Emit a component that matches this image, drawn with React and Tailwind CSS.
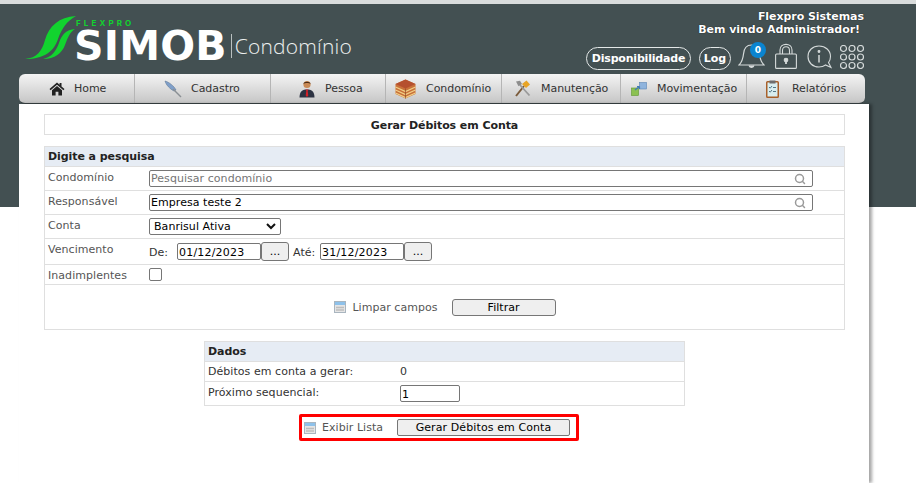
import { Search } from 'lucide-react';

const FONT = "font-['DejaVu_Sans',sans-serif]";

function HomeIcon() {
  return (
    <svg width="16" height="14" viewBox="0 0 16 14" className="shrink-0">
      <path d="M8 0.5 L0.5 7 L1.6 8.2 L8 2.8 L14.4 8.2 L15.5 7 L12.5 4.4 V1 H10.6 V2.8 Z" fill="#222" />
      <path d="M8 4 L3 8.2 V13.5 H6.6 V9.8 H9.4 V13.5 H13 V8.2 Z" fill="#222" />
    </svg>
  );
}

function FeatherIcon() {
  return (
    <svg width="18" height="18" viewBox="0 0 18 18" className="shrink-0">
      <path d="M1 1 C5 2 10 6 12 10 L10 11 C6 9 2 5 1 1 Z" fill="#7f9fc9" stroke="#56708f" strokeWidth="0.5" />
      <path d="M9 9 L17 17" stroke="#8a8f94" strokeWidth="1.4" />
    </svg>
  );
}

function PersonIcon() {
  return (
    <svg width="16" height="18" viewBox="0 0 16 18" className="shrink-0">
      <circle cx="8" cy="4.5" r="3.6" fill="#c98a55" />
      <path d="M4.4 4 C4.6 1 11.4 1 11.6 4 C10 2.8 6 2.8 4.4 4 Z" fill="#4a2c17" />
      <path d="M0.5 17.5 C0.5 11 4 9.5 8 9.5 C12 9.5 15.5 11 15.5 17.5 Z" fill="#2c3242" />
      <path d="M6.6 9.5 H9.4 L8.7 11 L9.3 15.5 L8 17 L6.7 15.5 L7.3 11 Z" fill="#d32027" />
    </svg>
  );
}

function BuildingIcon() {
  return (
    <svg width="21" height="20" viewBox="0 0 21 20" className="shrink-0">
      <path d="M10.5 0.5 L20.5 5 V15 L10.5 19.5 L0.5 15 V5 Z" fill="#c9713a" />
      <path d="M10.5 0.5 L20.5 5 L10.5 9.5 L0.5 5 Z" fill="#b5502f" />
      <path d="M0.5 8 L10.5 12.5 L20.5 8 M0.5 11 L10.5 15.5 L20.5 11 M0.5 14 L10.5 18.5 L20.5 14" fill="none" stroke="#f1d188" strokeWidth="1.2" />
      <path d="M10.5 9.5 V19.5" stroke="#8d4a25" strokeWidth="0.7" />
    </svg>
  );
}

function ToolsIcon() {
  return (
    <svg width="17" height="17" viewBox="0 0 17 17" className="shrink-0">
      <path d="M2 16 L10 6" stroke="#7a5a3a" strokeWidth="2" />
      <path d="M15.5 15.5 L6 5" stroke="#9a9a9a" strokeWidth="1.8" />
      <path d="M2 1.5 L6 0.8 L8 4 L4.5 6.2 Z" fill="#8d8d8d" />
      <path d="M8 4 L12.5 0.5 L16 4.5 L12 8 Z" fill="#e8a425" />
    </svg>
  );
}

function MoveIcon() {
  return (
    <svg width="16" height="14" viewBox="0 0 16 14" className="shrink-0">
      <rect x="0.5" y="6" width="7" height="7.5" fill="#8cc152" stroke="#5f9631" strokeWidth="0.6" />
      <rect x="8.5" y="0.5" width="7" height="6.5" fill="#8fb4dd" stroke="#5d86b4" strokeWidth="0.6" />
      <path d="M4 8 L8.5 4.5 M8.5 4.5 H6 M8.5 4.5 V7" stroke="#3f7ab8" strokeWidth="1.2" fill="none" />
    </svg>
  );
}

function ClipboardIcon() {
  return (
    <svg width="13" height="18" viewBox="0 0 13 18" className="shrink-0">
      <rect x="0.75" y="1.75" width="11.5" height="15.5" rx="0.8" fill="#d8eef0" stroke="#a8602a" strokeWidth="1.5" />
      <rect x="3.5" y="0.5" width="6" height="3" fill="#6d6d6d" />
      <path d="M3 7 L4.2 8.2 L6 6 M7 7.5 H10 M3 11 L4.2 12.2 L6 10 M7 11.5 H10" stroke="#44697a" strokeWidth="0.9" fill="none" />
    </svg>
  );
}

function ListIcon() {
  return (
    <svg width="12" height="12" viewBox="0 0 12 12" className="shrink-0">
      <rect x="0.5" y="0.5" width="11" height="11" fill="#e5e5e5" stroke="#a9b5bf" />
      <rect x="1" y="1" width="10" height="3" fill="#8ec1ea" />
      <path d="M2 6.5 H10 M2 9 H10" stroke="#bdbdbd" strokeWidth="1.5" />
    </svg>
  );
}

function LogoMark() {
  return (
    <svg width="52" height="44" viewBox="0 0 52 44" className="shrink-0">
      <path d="M0 43 C12 42 17 35 20 24 C24 10 34 1 51 0 C42 5 37 12 33 23 C29 35 20 43 0 43 Z" fill="#12d32f" />
      <path d="M18 43 C27 41 31 35 34 27 C37 18 41 14 50 13 C45 16 43 21 40 29 C37 37 30 43 18 43 Z" fill="#12d32f" />
    </svg>
  );
}

function BellIcon() {
  return (
    <div className="relative w-[27px] h-[26px]">
      <svg width="27" height="26" viewBox="0 0 27 26" fill="none" stroke="#d5dada" strokeWidth="1.2">
        <path d="M1 22 C4 19 5 16 5.500 11 C6 5 9 2 13.500 2 C18 2 21 5 21.500 11 C22 16 23 19 26 22 Z" />
        <path d="M11 22.500 C11.500 25 15.500 25 16 22.500" fill="#d5dada" />
      </svg>
      <span className="absolute right-[-1px] top-[-1px] w-[16px] h-[16px] rounded-full bg-[#0a84d0] text-white text-[9px] font-bold leading-[16px] text-center">0</span>
    </div>
  );
}

function LockIcon() {
  return (
    <svg width="22" height="26" viewBox="0 0 22 26" fill="none" stroke="#d5dada" strokeWidth="1.1">
      <path d="M5 11 V7 C5 -0.500 17 -0.500 17 7 V11" />
      <path d="M7.500 11 V7.500 C7.500 2.500 14.500 2.500 14.500 7.500 V11" />
      <rect x="0.600" y="11" width="20.800" height="14.400" rx="1" />
      <circle cx="11" cy="17" r="1.800" fill="#d5dada" />
      <path d="M11 17 V21" strokeWidth="1.800" />
    </svg>
  );
}

function InfoIcon() {
  return (
    <svg width="25" height="24" viewBox="0 0 25 24" fill="none" stroke="#d5dada" strokeWidth="1.100">
      <path d="M12 1 C5.500 1 1 5.500 1 11.500 C1 17.500 5.500 22 12 22 C14.500 22 16.500 21.500 18.500 20 L24 22.500 L21.500 17.500 C22.800 15.800 23.500 14 23.500 11.500 C23.500 5.500 18.500 1 12 1 Z" />
      <path d="M12 10 V17.500" strokeWidth="1.500" />
      <circle cx="12" cy="6.500" r="0.900" fill="#d5dada" />
    </svg>
  );
}

function DotsIcon() {
  return (
    <svg width="24" height="24" viewBox="0 0 24 24" fill="none" stroke="#d5dada" strokeWidth="1.200">
      {[3.500, 12, 20.500].map((y) =>
        [3.500, 12, 20.500].map((x) => <circle key={`${x}-${y}`} cx={x} cy={y} r="3" />)
      )}
    </svg>
  );
}

const MENU = [
  { label: 'Home', icon: <HomeIcon />, width: 'w-[116px]', gap: 'gap-[9px]', pl: 'pl-[30px]' },
  { label: 'Cadastro', icon: <FeatherIcon />, width: 'w-[136px]', gap: 'gap-[9px]', pl: 'pl-[29px]' },
  { label: 'Pessoa', icon: <PersonIcon />, width: 'w-[115px]', gap: 'gap-[10px]', pl: 'pl-[28px]' },
  { label: 'Condomínio', icon: <BuildingIcon />, width: 'w-[116px]', gap: 'gap-[10px]', pl: 'pl-[9px]' },
  { label: 'Manutenção', icon: <ToolsIcon />, width: 'w-[119px]', gap: 'gap-[10px]', pl: 'pl-[12px]' },
  { label: 'Movimentação', icon: <MoveIcon />, width: 'w-[126px]', gap: 'gap-[10px]', pl: 'pl-[10px]' },
  { label: 'Relatórios', icon: <ClipboardIcon />, width: 'flex-1', gap: 'gap-[13px]', pl: 'pl-[19px]' },
];

function FormRow({ label, height, children, last }) {
  return (
    <div className={`flex ${height} ${last ? '' : 'border-b border-[#dfdfdf]'}`}>
      <div className="w-[104px] pl-[3px] pt-[3px] text-[#555] shrink-0">{label}</div>
      <div className="flex-1 pt-[3px] flex items-start">{children}</div>
    </div>
  );
}

function SearchInput({ value, placeholder }) {
  return (
    <div className="w-[664px] h-[17px] border border-[#767676] rounded-[2px] flex items-center justify-between pl-[1px] pr-[6px]">
      {placeholder ? <span className="text-[#757575] pt-[1px]">{placeholder}</span> : <span className="text-black pt-[1px]">{value}</span>}
      <Search size={12} strokeWidth={3} className="text-[#9a9a9a]" />
    </div>
  );
}

function DateInput({ value, width }) {
  return (
    <div className={`${width} h-[17px] mt-[1px] border border-[#767676] rounded-[2px] pl-[1px] leading-[17px] text-black tracking-[0.2px]`}>{value}</div>
  );
}

function DotsButton() {
  return (
    <div className="w-[28px] h-[19px] border border-[#767676] rounded-[3px] bg-[#efefef] text-center leading-[18px] text-black">...</div>
  );
}

export default function App() {
  return (
    <div className={`${FONT} w-[916px] h-[483px] overflow-hidden bg-white text-[11px] tracking-[0.05px]`}>
      <div className="h-[4px] bg-[#d9dcdc]" />
      <div className="h-[203px] bg-[#435052] pl-[19px] pr-[51px]">
        <div className="h-[70px] flex justify-between">
          <div className="flex items-start pt-[12px] ml-[6px]">
            <LogoMark />
            <div className="ml-[-1px]">
              <div className="text-[#12d32f] text-[8px] font-['Inter',sans-serif] font-bold tracking-[3.1px] leading-[8px] mt-[3px]">FLEXPRO</div>
              <div className="text-white text-[41px] font-bold leading-[38px] tracking-[0.2px] ml-[-2px]">SIMOB</div>
            </div>
            <div className="ml-[4px] mt-[18px] h-[24px] border-l border-[#b9c0c0] pl-[3px] text-[#eef0f0] text-[21px] font-['Open_Sans',sans-serif] font-light leading-[24px] tracking-[0.2px]">Condomínio</div>
          </div>
          <div className="flex flex-col items-end pt-[6px] pr-[1px]">
            <div className="text-white font-bold leading-[13px] tracking-[-0.05px] text-right [text-shadow:0_0_1px_#000]">Flexpro Sistemas</div>
            <div className="text-white font-bold leading-[13px] tracking-[-0.05px] mr-[4px] [text-shadow:0_0_1px_#000]">Bem vindo Administrador!</div>
            <div className="flex items-start mt-[7px] h-[27px]">
              <div className="h-[23px] w-[105px] mt-[4px] border border-[#e4e8e8] rounded-full text-white font-bold text-center leading-[22px] tracking-[-0.2px]">Disponibilidade</div>
              <div className="h-[23px] w-[32px] mt-[4px] ml-[8px] border border-[#e4e8e8] rounded-full text-white font-bold text-center leading-[22px]">Log</div>
              <div className="ml-[7px]"><BellIcon /></div>
              <div className="ml-[10px]"><LockIcon /></div>
              <div className="ml-[10px] mt-[2px]"><InfoIcon /></div>
              <div className="ml-[8px] mt-[2px]"><DotsIcon /></div>
            </div>
          </div>
        </div>
        <nav className="w-[846px] h-[30px] flex rounded-[6px] bg-gradient-to-b from-[#f4f4f4] to-[#c6c6c6] border-b border-[#3a4446] tracking-[-0.05px]">
          {MENU.map((item, i) => (
            <div
              key={item.label}
              className={`${item.width} ${item.pl} ${item.gap} flex items-center text-[#333] ${i < MENU.length - 1 ? 'border-r border-[#b5b5b5]' : ''}`}
            >
              {item.icon}
              <span className="pt-[1px]">{item.label}</span>
            </div>
          ))}
        </nav>
      </div>
      <main className="relative mt-[-103px] ml-[19px] w-[850px] h-[379px] bg-white pl-[25px] pr-[24px] pt-[10px] shadow-[3px_0_3px_rgba(0,0,0,0.35)]">
        <div className="h-[21px] border border-[#dfdfdf] text-center font-bold text-[#222] leading-[21px] tracking-[-0.07px]">Gerar Débitos em Conta</div>
        <section className="mt-[11px] border border-[#dfdfdf]">
          <div className="h-[20px] bg-[#e6ecf4] border-b border-[#dfdfdf] pl-[3px] font-bold text-[#222] leading-[20px] tracking-[-0.07px]">Digite a pesquisa</div>
          <FormRow label="Condomínio" height="h-[24px]">
            <SearchInput placeholder="Pesquisar condomínio" />
          </FormRow>
          <FormRow label="Responsável" height="h-[24px]">
            <SearchInput value="Empresa teste 2" />
          </FormRow>
          <FormRow label="Conta" height="h-[24px]">
            <div className="w-[132px] h-[17px] border border-[#767676] rounded-[2px] flex items-center justify-between pl-[4px] pr-[4px] text-black">
              <span className="pt-[1px]">Banrisul Ativa</span>
              <svg width="10" height="7" viewBox="0 0 10 7" fill="none" stroke="#111" strokeWidth="2"><path d="M1 1 L5 5 L9 1" /></svg>
            </div>
          </FormRow>
          <FormRow label="Vencimento" height="h-[26px]">
            <div className="flex items-start">
              <span className="text-[#333] mt-[3px] w-[28px]">De:</span>
              <DateInput value="01/12/2023" width="w-[84px]" />
              <DotsButton />
              <span className="text-[#333] mt-[3px] ml-[4px] w-[27px]">Até:</span>
              <DateInput value="31/12/2023" width="w-[84px]" />
              <DotsButton />
            </div>
          </FormRow>
          <FormRow label="Inadimplentes" height="h-[20px]">
            <div className="w-[13px] h-[13px] border border-[#767676] rounded-[2px] bg-white" />
          </FormRow>
          <div className="h-[44px] flex items-center justify-center pl-[1px] text-[#555]">
            <ListIcon />
            <span className="ml-[6px] mr-[14px] pt-[2px]">Limpar campos</span>
            <div className="w-[104px] h-[17px] border border-[#767676] rounded-[3px] bg-[#efefef] text-center text-black leading-[16px]">Filtrar</div>
          </div>
        </section>
        <section className="mt-[11px] ml-[160px] w-[481px] border border-[#dfdfdf]">
          <div className="h-[20px] bg-[#e6ecf4] border-b border-[#dfdfdf] pl-[3px] font-bold text-[#222] leading-[20px] tracking-[-0.07px]">Dados</div>
          <div className="h-[20px] border-b border-[#dfdfdf] flex items-center pl-[3px] pt-[1px] text-[#333]">
            <span className="w-[192px]">Débitos em conta a gerar:</span>
            <span>0</span>
          </div>
          <div className="h-[23px] flex pl-[3px] text-[#333]">
            <span className="w-[192px] pt-[3px]">Próximo sequencial:</span>
            <div className="w-[60px] h-[17px] mt-[3px] border border-[#767676] rounded-[2px] pl-[1px] text-black leading-[17px]">1</div>
          </div>
        </section>
        <div className="mt-[8px] ml-[255px] w-[280px] h-[27px] border-[3px] border-[#ff0000] rounded-[2px] flex items-center pl-[2px] text-[#555]">
          <ListIcon />
          <span className="ml-[6px] w-[75px] pt-[1px]">Exibir Lista</span>
          <div className="w-[173px] h-[17px] border border-[#767676] rounded-[2px] bg-[#efefef] text-center text-black leading-[15px] tracking-[0.1px]">Gerar Débitos em Conta</div>
        </div>
      </main>
    </div>
  );
}
